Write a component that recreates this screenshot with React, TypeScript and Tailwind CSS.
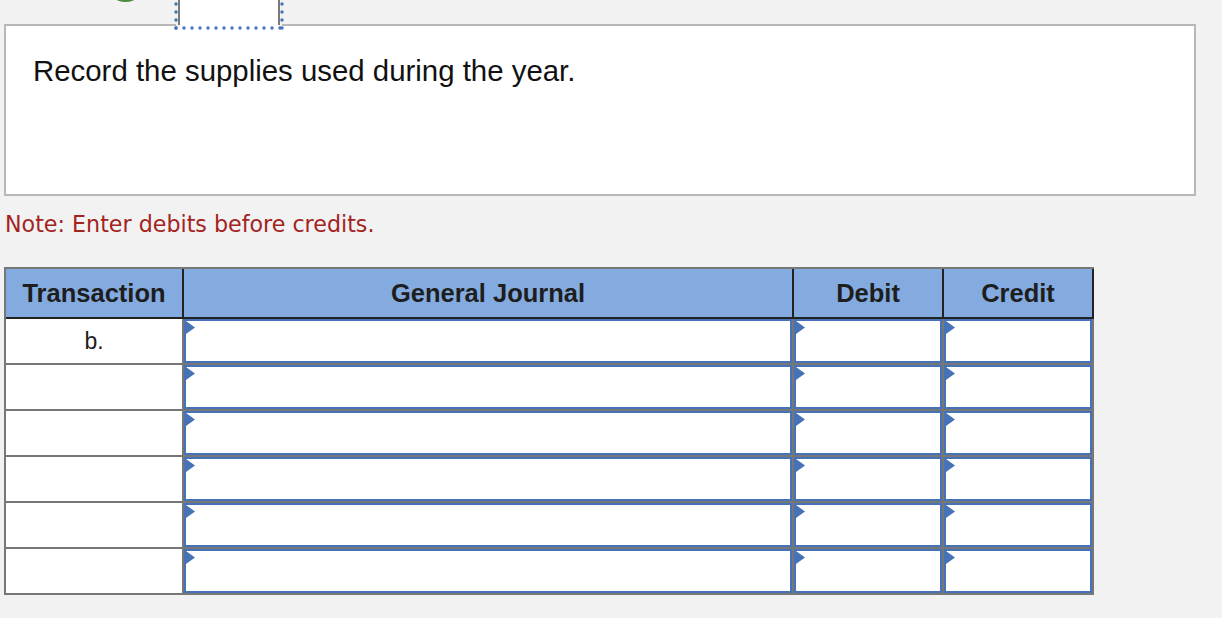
import React from "react";

const BLUE = "#4673b8";
const ROW_COLS = "grid grid-cols-[176px_608px_148px_148px] gap-x-[2px]";

function Marker() {
  return (
    <svg className="absolute left-0 top-0" width="9" height="13" viewBox="0 0 9 13">
      <path d="M0 0 L9 6.5 L0 13 Z" fill={BLUE} />
    </svg>
  );
}

function EntryCell() {
  return (
    <div className="relative h-[44px] border-2 border-[#4673b8] bg-white">
      <Marker />
    </div>
  );
}

function TopTab() {
  const bottomDots = Array.from({ length: 14 }, (_, i) => 2 + i * 8);
  const sideDots = [4, 12, 20, 28];
  return (
    <svg className="absolute left-[174px] top-0 z-10" width="112" height="31" viewBox="0 0 112 31">
      <rect x="2" y="24" width="106" height="3" fill="#f2f2f2" />
      <rect x="6" y="0" width="98" height="27" fill="#ffffff" />
      <rect x="4" y="0" width="2" height="25" fill="#7a7a7a" />
      <rect x="104" y="0" width="2" height="25" fill="#7a7a7a" />
      {sideDots.map((y) => (
        <circle key={`l${y}`} cx="2" cy={y} r="1.7" fill={BLUE} />
      ))}
      {sideDots.map((y) => (
        <circle key={`r${y}`} cx="108" cy={y} r="1.7" fill={BLUE} />
      ))}
      {bottomDots.map((x) => (
        <circle key={`b${x}`} cx={x} cy="28" r="1.7" fill={BLUE} />
      ))}
    </svg>
  );
}

export default function App() {
  const rows = ["b.", "", "", "", "", ""];

  return (
    <div className="relative h-[618px] w-[1222px] overflow-hidden bg-[#f2f2f2] pt-[24px] font-['Liberation_Sans',Arial,sans-serif] text-[#1f1f1f]">
      <svg className="absolute left-[100px] top-0 z-10" width="50" height="6" viewBox="0 0 50 6">
        <circle cx="25.5" cy="-18" r="20" fill="#4d8c3c" />
      </svg>
      <TopTab />

      <div className="ml-[4px] h-[172px] w-[1192px] border-2 border-[#b8b8b8] bg-white pl-[27px] pt-[29px]">
        <p className="text-[29.4px] leading-[32px] text-[#111]">Record the supplies used during the year.</p>
      </div>

      <p className="ml-[5px] mt-[15px] font-['DejaVu_Sans',Verdana,sans-serif] text-[22.2px] leading-[26px] text-[#a3241f]">
        Note: Enter debits before credits.
      </p>

      <div className="ml-[4px] mt-[30px] w-[1090px] border-b-2 border-l-2 border-t-2 border-[#777]">
        <div className={`${ROW_COLS} border-b-2 border-r-2 border-[#222] bg-[#222]`}>
          {["Transaction", "General Journal", "Debit", "Credit"].map((h) => (
            <div key={h} className="flex h-[48px] items-center justify-center bg-[#83abe0] text-[25.5px] font-bold text-[#1e1e1e]">
              {h}
            </div>
          ))}
        </div>
        <div className="flex flex-col gap-y-[2px] bg-[#777]">
          {rows.map((label, i) => (
            <div key={i} className={`${ROW_COLS} border-r-2 border-[#777] bg-[#777]`}>
              <div className="flex h-[44px] items-center justify-center bg-white text-[23px] text-[#1e1e1e]">{label}</div>
              <EntryCell />
              <EntryCell />
              <EntryCell />
            </div>
          ))}
        </div>
      </div>
    </div>
  );
}
